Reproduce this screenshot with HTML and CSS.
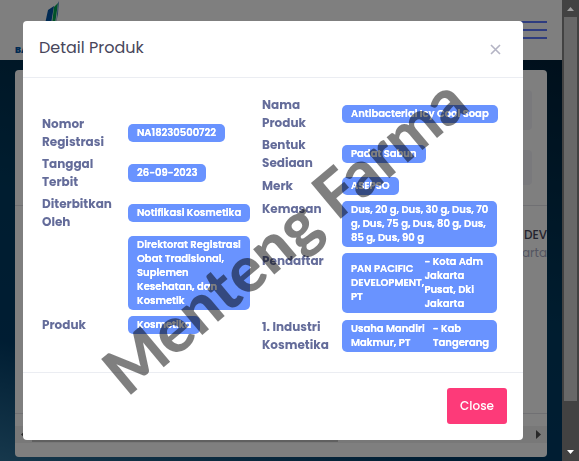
FILE: index.html
```html
<!DOCTYPE html>
<html lang="id">
<head>
    <meta charset="UTF-8">
    <meta name="viewport" content="width=device-width, initial-scale=1.0">
    <title>Detail Produk</title>
    <link rel="stylesheet" href="styles.css">
</head>
<body>

<div class="page">
    <header class="topbar">
        <a class="brand" href="#">
            <svg class="brand-mark" width="20" height="40" viewBox="0 0 20 40">
                <path d="M0 24 L3 10 L9 6 L6 24 Z" fill="#0054a6"/>
                <path d="M7 24 L9 7 L13 3 L10 24 Z" fill="#00a651"/>
                <path d="M11 24 L13 3 L14 1 L13 14 L11 24 Z" fill="#4a86c5"/>
            </svg>
            <span class="brand-name">BA</span>
        </a>
        <button class="menu-toggle" type="button" aria-label="Menu"><span></span><span></span><span></span></button>
    </header>

    <main class="content">
        <section class="card">
            <div class="filters">
                <input class="filter" type="text" aria-label="Cari">
                <input class="filter filter-small" type="text" aria-label="Filter">
            </div>
            <div class="results">
                <div class="company">DEV</div>
                <div class="city">arta</div>
            </div>
            <div class="hscroll">
                <svg width="5" height="9" viewBox="0 0 5 9"><path d="M5 0 V9 L0 4.500 Z" fill="#505050"/></svg>
                <div class="hthumb"></div>
                <svg width="5" height="9" viewBox="0 0 5 9"><path d="M0 0 V9 L5 4.500 Z" fill="#505050"/></svg>
            </div>
        </section>
    </main>
</div>

<div class="backdrop">
    <div class="modal" role="dialog" aria-labelledby="modalTitle">
        <div class="modal-header">
            <h5 class="modal-title" id="modalTitle">Detail Produk</h5>
            <button class="modal-x" type="button" aria-label="Tutup">
                <svg width="11" height="11" viewBox="0 0 11 11"><path d="M1 1 L10 10 M10 1 L1 10" stroke="#b4b4c4" stroke-width="1.600"/></svg>
            </button>
        </div>
        <div class="modal-body">
            <table class="detail">
                <tr><th>Nomor<br>Registrasi</th><td><span class="badge">NA18230500722</span></td></tr>
                <tr><th>Tanggal<br>Terbit</th><td><span class="badge">26-09-2023</span></td></tr>
                <tr><th>Diterbitkan<br>Oleh</th><td><span class="badge">Notifikasi Kosmetika</span></td></tr>
                <tr><th></th><td><span class="badge">Direktorat Registrasi<br>Obat Tradisional,<br>Suplemen<br>Kesehatan, dan<br>Kosmetik</span></td></tr>
                <tr><th>Produk</th><td><span class="badge">Kosmetika</span></td></tr>
            </table>
            <table class="detail detail-right">
                <tr><th>Nama<br>Produk</th><td><span class="badge">Antibacterial Icy Cool Soap</span></td></tr>
                <tr><th>Bentuk<br>Sediaan</th><td><span class="badge">Padat Sabun</span></td></tr>
                <tr><th>Merk</th><td><span class="badge">ASEPSO</span></td></tr>
                <tr class="top"><th>Kemasan</th><td><span class="badge badge-wide">Dus, 20 g, Dus, 30 g, Dus, 70<br>g, Dus, 75 g, Dus, 80 g, Dus,<br>85 g, Dus, 90 g</span></td></tr>
                <tr class="top"><th>Pendaftar</th><td><span class="badge badge-wide"><span>PAN PACIFIC<br>DEVELOPMENT,<br>PT</span><span>- Kota Adm<br>Jakarta<br>Pusat, Dki<br>Jakarta</span></span></td></tr>
                <tr><th>1. Industri<br>Kosmetika</th><td><span class="badge badge-wide badge-split"><span>Usaha Mandiri<br>Makmur, PT</span><span>- Kab<br>Tangerang</span></span></td></tr>
            </table>
        </div>
        <div class="modal-footer">
            <button class="btn-close" type="button">Close</button>
        </div>
    </div>
    <div class="vscroll">
        <svg width="7" height="4" viewBox="0 0 7 4"><path d="M0 4 H7 L3.500 0 Z" fill="#a0a0a0"/></svg>
        <div class="vthumb"></div>
        <svg width="7" height="4" viewBox="0 0 7 4"><path d="M0 0 H7 L3.500 4 Z" fill="#ffffff"/></svg>
    </div>
</div>

<div class="watermark">Menteng Farma</div>

</body>
</html>
```

FILE: styles.css
```css
* {
    box-sizing: border-box;
}
body {
    margin: 0;
    font-family: Poppins, Inter, sans-serif;
    font-size: 13px;
    overflow: hidden;
}
button {
    font-family: inherit;
    border: none;
    padding: 0;
    background: none;
    cursor: pointer;
}

/* page behind the modal */
.page {
    display: flex;
    flex-direction: column;
    min-height: 100vh;
    padding-right: 17px;
}
.topbar {
    display: flex;
    justify-content: space-between;
    align-items: center;
    height: 60px;
    padding: 0 15px;
    background-color: #fff;
}
.brand {
    display: flex;
    flex-direction: column;
    color: #0054a6;
    text-decoration: none;
}
.brand-mark {
    margin-left: 30px;
}
.brand-name {
    font-size: 9px;
    font-weight: 800;
    line-height: 20px;
}
.menu-toggle {
    display: flex;
    flex-direction: column;
    gap: 6px;
    width: 26px;
}
.menu-toggle span {
    height: 2px;
    background-color: #5d78ff;
}
.content {
    flex: 1;
    padding: 10px 15px 4px;
    background: linear-gradient(15deg, #2d7098 0%, #003b66 22%, #003b60 50%, #002038 100%);
}
.card {
    background-color: #fff;
    border-radius: 4px;
    overflow: hidden;
}
.filters {
    display: flex;
    flex-direction: column;
    gap: 20px;
    padding: 20px 15px;
}
.filter {
    width: 100%;
    height: 40px;
    border: none;
    border-radius: 4px;
    background-color: #f3f3f8;
}
.filter-small {
    height: 35px;
}
.results {
    height: 209px;
    padding-top: 20px;
    border-top: 1px solid #e0e0e6;
    border-bottom: 1px solid #e0e0e6;
    line-height: 18px;
    text-align: right;
}
.company {
    color: #48465b;
    font-weight: 500;
    font-size: 12px;
}
.city {
    color: #a7abc3;
    font-size: 12px;
}
.hscroll {
    display: flex;
    align-items: center;
    justify-content: space-between;
    gap: 6px;
    height: 17px;
    margin: 12px 0 14px;
    padding: 0 6px;
    background-color: #f1f1f1;
}
.hthumb {
    width: 306px;
    height: 14px;
    margin-right: auto;
    background-color: #c1c1c1;
}

/* modal */
.backdrop {
    display: flex;
    justify-content: space-between;
    position: fixed;
    inset: 0;
    background-color: rgba(0, 0, 0, 0.5);
}
.modal {
    display: flex;
    flex-direction: column;
    width: 100%;
    max-width: 500px;
    margin: auto;
    background-color: #fff;
    border-radius: 4px;
    transform: translateX(-8px);
}
.modal-header {
    display: flex;
    justify-content: space-between;
    align-items: center;
    height: 57px;
    padding: 0 22px 0 16px;
    border-bottom: 1px solid #ebedf2;
}
.modal-title {
    margin: 0;
    color: #48465b;
    font-size: 16px;
    font-weight: 400;
    line-height: 20px;
    padding-bottom: 2px;
}
.modal-x {
    display: flex;
}
.modal-body {
    display: flex;
    align-items: center;
    padding: 16px 26px 16px 17px;
}
.detail {
    flex: 0 0 220px;
    border-collapse: collapse;
}
.detail-right {
    flex: 1;
    width: 100%;
    min-width: 0;
    table-layout: fixed;
}
.detail th {
    width: 88px;
    padding: 2px;
    color: #646c9a;
    font-size: 12px;
    font-weight: 700;
    line-height: 18px;
    text-align: left;
}
.detail-right th {
    width: 82px;
}
.detail td {
    padding: 3px 0;
}
.detail .top th {
    vertical-align: top;
}
.badge {
    display: flex;
    width: fit-content;
    padding: 2px 9px;
    background-color: #6993ff;
    border-radius: 5px;
    color: #fff;
    font-size: 10px;
    font-weight: 600;
    line-height: 14px;
    text-shadow: 0 0 0 #fff;
    white-space: nowrap;
}
.badge-wide {
    width: 100%;
    align-items: center;
}
.badge-split {
    gap: 8px;
}
.modal-footer {
    display: flex;
    justify-content: flex-end;
    padding: 15px 16px 16px;
    border-top: 1px solid #ebedf2;
}
.btn-close {
    width: 60px;
    height: 36px;
    background-color: #fd3a79;
    border-radius: 3px;
    color: #fff;
    font-size: 12px;
    font-weight: 500;
}

/* window scroll bar */
.vscroll {
    display: flex;
    flex-direction: column;
    align-items: center;
    gap: 6px;
    flex: 0 0 17px;
    padding: 7px 2px;
    background-color: #424242;
}
.vthumb {
    width: 13px;
    height: 86%;
    margin-bottom: auto;
    background-color: #686868;
}

.watermark {
    position: fixed;
    top: 51%;
    left: 49%;
    color: rgba(0, 0, 0, 0.5);
    font-family: Lato, sans-serif;
    font-size: 64px;
    font-weight: 900;
    line-height: 1;
    white-space: nowrap;
    transform: translate(-50%, -50%) rotate(-40deg);
    pointer-events: none;
}
```
